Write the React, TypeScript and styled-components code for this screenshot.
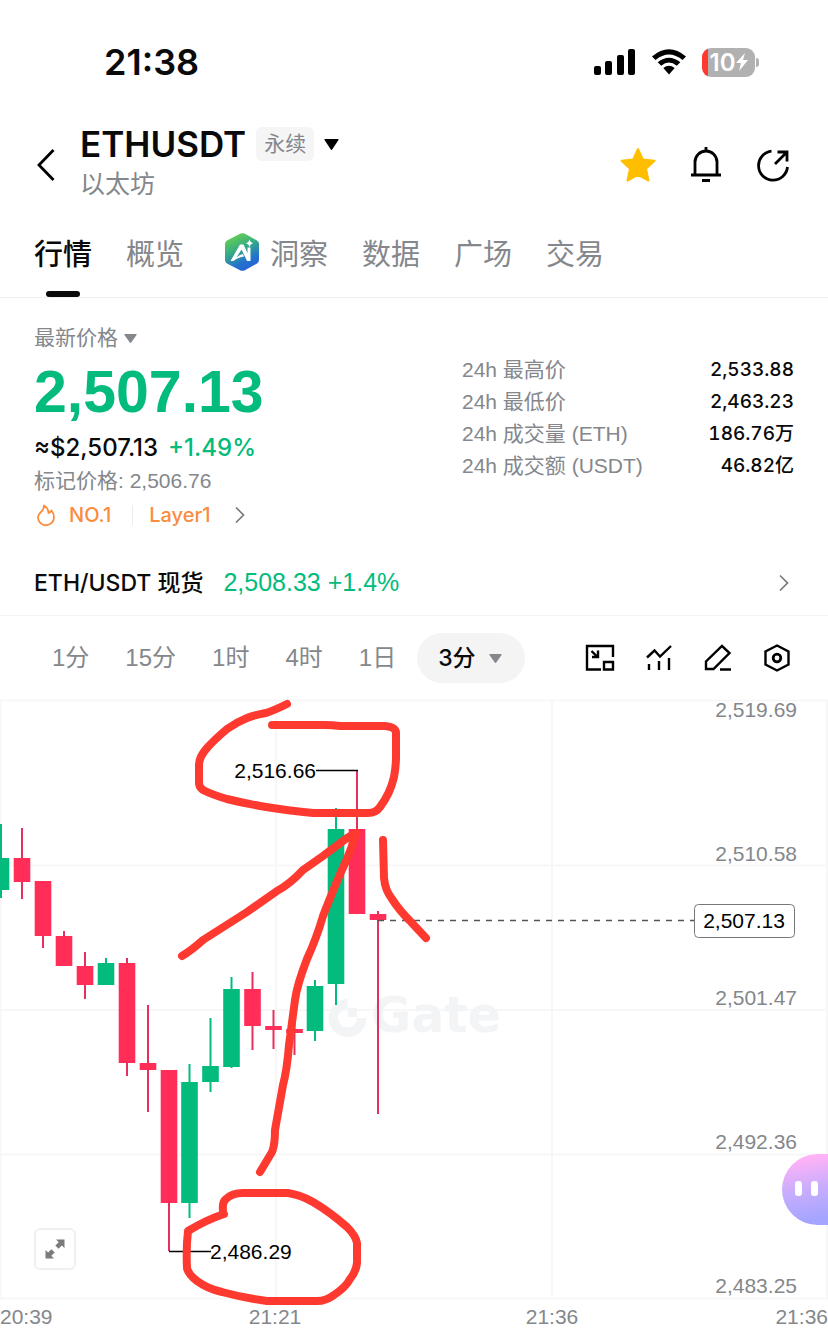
import React from 'react';
import styled, { createGlobalStyle } from 'styled-components';

const GREEN = '#02bb7c';
const RED = '#ff2d57';
const GREY = '#84878b';
const INK = '#0a0a0a';
const MARK = '#fe3a30';
const PLAIN = "'Liberation Sans', 'Noto Sans CJK SC', sans-serif";

const GlobalStyle = createGlobalStyle`
  * { box-sizing: border-box; }
  body {
    margin: 0;
    background: #fff;
    color: ${INK};
    font-family: Inter, 'Noto Sans CJK SC', sans-serif;
  }
  button { font: inherit; color: inherit; background: none; border: 0; padding: 0; margin: 0; }
  a { color: inherit; text-decoration: none; }
  svg { display: block; flex: none; }
  h1, p, dl, dt, dd { margin: 0; font-weight: inherit; }
`;

const Page = styled.div`
  overflow: hidden;
`;

const StatusBar = styled.div`
  display: flex;
  align-items: center;
  justify-content: space-between;
  padding: 40px 73px 0 104px;
  height: 84px;
`;
const Clock = styled.time`
  font-size: 36px;
  line-height: 44px;
  font-weight: 600;
`;
const StatusIcons = styled.div`
  display: flex;
  align-items: center;
  gap: 15px;
`;
const Battery = styled.div`
  position: relative;
  width: 53px;
  height: 29px;
  border-radius: 9px;
  background: linear-gradient(90deg, ${MARK} 6px, #b1b1b1 6px);
  color: #fff;
  display: flex;
  align-items: center;
  justify-content: center;
  padding-left: 2px;
  font-size: 24px;
  font-weight: 600;
  &::after {
    content: '';
    position: absolute;
    right: -4px;
    top: 10px;
    width: 3px;
    height: 9px;
    border-radius: 0 4px 4px 0;
    background: #b1b1b1;
  }
`;

const Header = styled.header`
  display: flex;
  align-items: center;
  padding: 36px 36px 0 36px;
  height: 126px;
`;
const IconButton = styled.button`
  display: flex;
  align-items: center;
  justify-content: center;
`;
const Pair = styled.div`
  flex: 1;
  margin-left: 24px;
  padding-bottom: 6px;
`;
const PairTop = styled.div`
  display: flex;
  align-items: center;
  gap: 10px;
`;
const PairName = styled.h1`
  font-size: 35px;
  line-height: 44px;
  font-weight: 600;
`;
const Badge = styled.span`
  padding: 0 8px;
  border-radius: 6px;
  background: #f5f5f6;
  color: ${GREY};
  font-size: 21px;
  line-height: 34px;
`;
const PairSub = styled.p`
  color: ${GREY};
  font-size: 25px;
  line-height: 36px;
`;
const HeaderActions = styled.div`
  display: flex;
  align-items: center;
  gap: 32px;
`;

const Tabs = styled.nav`
  display: flex;
  gap: 34px;
  padding: 0 34px;
  height: 88px;
  border-bottom: 1px solid #f0f0f1;
`;
const Tab = styled.a<{ $active?: boolean }>`
  position: relative;
  display: flex;
  align-items: center;
  gap: 10px;
  height: 88px;
  padding-bottom: 4px;
  font-size: 29px;
  font-weight: ${(p) => (p.$active ? 500 : 400)};
  color: ${(p) => (p.$active ? INK : GREY)};
  &::after {
    content: '';
    display: ${(p) => (p.$active ? 'block' : 'none')};
    position: absolute;
    left: 12px;
    right: 12px;
    bottom: 1px;
    height: 6px;
    border-radius: 3px;
    background: ${INK};
  }
`;

const Summary = styled.section`
  display: flex;
  justify-content: space-between;
  padding: 26px 34px 0;
  height: 252px;
`;
const PriceKind = styled.button`
  display: flex;
  align-items: center;
  gap: 6px;
  color: ${GREY};
  font-size: 21px;
  line-height: 28px;
`;
const Price = styled.p`
  color: ${GREEN};
  font-family: ${PLAIN};
  font-size: 59px;
  line-height: 80px;
  font-weight: 700;
`;
const Fiat = styled.p`
  display: flex;
  gap: 10px;
  font-size: 24px;
  line-height: 32px;
  font-weight: 500;
`;
const Gain = styled.span`
  color: ${GREEN};
`;
const MarkPrice = styled.p`
  color: ${GREY};
  font-family: ${PLAIN};
  font-size: 21px;
  line-height: 34px;
`;
const Tags = styled.div`
  display: flex;
  align-items: center;
  color: #fb8c3f;
  font-size: 20px;
  line-height: 34px;
  font-weight: 500;
`;
const TagLink = styled.a`
  display: flex;
  align-items: center;
  gap: 11px;
`;
const Divider = styled.i`
  width: 1px;
  height: 20px;
  margin: 0 16px 0 21px;
  background: #ececee;
`;
const TagMore = styled(IconButton)`
  margin-left: 24px;
`;

const Stats = styled.dl`
  width: 332px;
  padding-top: 30px;
`;
const Stat = styled.div`
  display: flex;
  justify-content: space-between;
  line-height: 32px;
  height: 32px;
  dt { color: ${GREY}; font-family: ${PLAIN}; font-size: 21px; }
  dd { font-weight: 500; font-size: 19px; font-variant-numeric: tabular-nums; }
`;

const SpotRow = styled.a`
  display: flex;
  align-items: center;
  height: 66px;
  padding: 0 38px 0 34px;
  border-bottom: 1px solid #f3f3f4;
`;
const SpotText = styled.span`
  display: flex;
  flex: 1;
  align-items: baseline;
  gap: 20px;
  padding-bottom: 3px;
`;
const SpotName = styled.span`
  font-size: 23px;
  font-weight: 500;
`;
const SpotPrice = styled(Gain)`
  font-family: ${PLAIN};
  font-size: 25px;
`;

const Toolbar = styled.div`
  display: flex;
  align-items: center;
  justify-content: space-between;
  height: 84px;
  padding: 0 36px 0 52px;
`;
const Intervals = styled.div`
  display: flex;
  align-items: center;
  gap: 36px;
`;
const Interval = styled.button`
  color: ${GREY};
  font-family: ${PLAIN};
  font-size: 24px;
  line-height: 50px;
`;
const Picked = styled(Interval)`
  display: flex;
  align-items: center;
  gap: 13px;
  margin-left: -15px;
  padding: 0 23px 0 21px;
  border-radius: 25px;
  background: #f4f4f5;
  color: ${INK};
  font-family: Inter, 'Noto Sans CJK SC', sans-serif;
  font-size: 23px;
  font-weight: 500;
`;
const Tools = styled.div`
  display: flex;
  gap: 29px;
`;

const ChartArea = styled.section`
  position: relative;
`;
const ChartSvg = styled.svg`
  width: 100%;
  height: auto;
  overflow: visible;
  font-family: ${PLAIN};
  font-size: 21px;
`;
const ExpandButton = styled(IconButton)`
  position: absolute;
  left: 34px;
  bottom: 70px;
  width: 42px;
  height: 42px;
  border: 2px solid #f0f0f1;
  border-radius: 6px;
  background: #fff;
`;
const Assistant = styled(IconButton)`
  position: absolute;
  right: 0;
  bottom: 115px;
  width: 46px;
  height: 71px;
  gap: 9px;
  padding: 0 0 2px 3px;
  border-radius: 36px 0 0 36px;
  background: linear-gradient(170deg, #ffb2f6 10%, #c9adfd 50%, #a5a5ff 90%);
`;
const Eye = styled.i`
  width: 7px;
  height: 15px;
  border-radius: 3px;
  background: #fff;
`;

const Caret = ({ w, h, color }: { w: number; h: number; color: string }) => (
  <svg width={w} height={h} viewBox="0 0 14 10" preserveAspectRatio="none" fill={color}>
    <path d="M1 0H13Q14 .2 13.5 1L7.8 9.4Q7 10.4 6.2 9.4L.5 1Q0 .2 1 0Z" />
  </svg>
);
const Chevron = () => (
  <svg width="12" height="18" viewBox="0 0 12 18" fill="none" stroke="#77797d" strokeWidth="1.7">
    <path d="M2 1.5L9.5 9L2 16.5" />
  </svg>
);

type Candle = [x: number, up: boolean, top: number, bottom: number, high: number, low: number];
const candles: Candle[] = [
  [1, true, 158, 190, 124, 198],
  [22, false, 158, 182, 128, 199],
  [43, false, 181, 236, 181, 248],
  [64, false, 236, 266, 231, 266],
  [85, false, 266, 285, 252, 299],
  [106, true, 263, 285, 258, 285],
  [127, false, 263, 363, 258, 376],
  [148, false, 363, 370, 305, 412],
  [169, false, 370, 503, 370, 551],
  [189.5, true, 382, 503, 364, 518],
  [210.5, true, 366, 382, 318, 392],
  [231.5, true, 289, 367, 277, 368],
  [252.5, false, 289, 326, 272, 350],
  [273.5, false, 326, 330, 310, 349],
  [294.5, false, 329, 333, 320, 355],
  [315, true, 286, 331, 280, 341],
  [336, true, 129, 284, 108, 305],
  [357, false, 129, 214, 70, 214],
  [378, false, 214, 220, 211, 414],
];
const gridY = [0.5, 165.5, 310, 454.5, 598.5];
const gridX = [0.5, 276, 552, 827];
const priceLabels: [string, number][] = [
  ['2,519.69', 17], ['2,510.58', 161], ['2,501.47', 305], ['2,492.36', 449], ['2,483.25', 593],
];

const Chart = () => (
  <ChartSvg viewBox="0 0 828 640" role="img" aria-label="ETHUSDT">
    <g stroke="#f7f7f8" strokeWidth="2">
      {gridY.map((y) => <line key={y} x1="0" x2="828" y1={y} y2={y} />)}
      {gridX.map((x) => <line key={x} x1={x} x2={x} y1="0" y2="598" />)}
    </g>
    <g fill="#f3f4f6">
      <path d="M347.500 299A19 19 0 1 0 366.500 318H357A9.500 9.500 0 1 1 347.500 308.500Z" />
      <rect x="348" y="308" width="9" height="9" />
      <text x="371" y="332" fontFamily="'DejaVu Sans', sans-serif" fontSize="49" fontWeight="700">Gate</text>
    </g>
    {candles.map(([x, up, top, bottom, high, low]) => (
      <g key={x} fill={up ? GREEN : RED}>
        <rect x={x - 1} y={high} width="2" height={low - high} fill={up ? GREEN : '#e5305f'} />
        <rect x={x - 8.3} y={top} width="16.600" height={bottom - top} />
      </g>
    ))}
    <path d="M378 220.500H694" stroke="#555" strokeWidth="1.500" strokeDasharray="6 6" />
    <path d="M316 70.500H358M169 551.500H211" stroke="#000" strokeWidth="1.500" />
    <g fill={GREY}>
      {priceLabels.map(([label, y]) => (
        <text key={label} x="797" y={y} textAnchor="end">{label}</text>
      ))}
      <text x="0" y="624">20:39</text>
      <text x="275" y="624" textAnchor="middle">21:21</text>
      <text x="552" y="624" textAnchor="middle">21:36</text>
      <text x="828" y="624" textAnchor="end">21:36</text>
    </g>
    <rect x="694.500" y="204.500" width="100" height="33" rx="4" fill="#fff" stroke="#777" />
    <g fill="#000">
      <text x="744" y="228" textAnchor="middle">2,507.13</text>
      <text x="316" y="78" textAnchor="end">2,516.66</text>
      <text x="210" y="559">2,486.29</text>
    </g>
    <g fill="none" stroke={MARK} strokeWidth="8" strokeLinecap="round" strokeLinejoin="round">
      <path d="M287 4Q275 10 266 13Q254 15 247 18Q237 22 227 29Q214 40 207 48Q199 57 199 65V83Q199 87 203 90Q213 95 227 99Q243 103 260 106Q290 111 313 113H368Q376 113 380 107Q390 94 394 77Q396 66 396 57V33Q396 27 385 26H340Q332 25 325 25H272" />
      <path d="M182 256Q192 250 203 240L247 212L277 191Q290 184 303 170L323 156L347 138Q353 134 356 133Q352 147 347 159Q337 180 323 216Q317 237 307 259Q297 285 295 300L289 345Q287 370 283 385L275 430Q275 445 272 452L260 472" />
      <path d="M383 140L384 178Q385 190 392 199Q399 210 411 222L426 238" />
      <path d="M224 514Q206 520 188 531Q186 548 187 568Q188 574 197 581Q208 589 222 592Q244 598 267 601H317Q326 601 334 595Q346 587 350 579Q356 572 357 563V543Q356 536 347 527Q330 512 313 502Q301 495 288 493H243Q232 493 226 499Q222 502 223 511" />
    </g>
  </ChartSvg>
);

export default function App() {
  return (
    <Page>
      <GlobalStyle />
      <StatusBar>
        <Clock>21:38</Clock>
        <StatusIcons>
          <svg width="42" height="28" viewBox="0 0 42 28" fill="#000">
            <rect x="0" y="18" width="7" height="9" rx="2" />
            <rect x="11" y="13" width="7" height="14" rx="2" />
            <rect x="23" y="7" width="7" height="20" rx="2" />
            <rect x="34" y="1" width="7" height="26" rx="2" />
          </svg>
          <svg width="36" height="28" viewBox="0 0 36 28" fill="#000">
            <path d="M1 8.500Q18-6 35 8.500L31.500 12Q18 1 4.500 12Z" />
            <path d="M6.700 14.300Q18 5 29.300 14.300L25.800 17.800Q18 11 10.200 17.800Z" />
            <path d="M12.300 20Q18 15.500 23.700 20L18 26.500Z" />
          </svg>
          <Battery>
            10
            <svg width="14" height="18" viewBox="0 0 14 18" fill="#fff">
              <path d="M10 0L1 10H6L4 18L13 7H8Z" />
            </svg>
          </Battery>
        </StatusIcons>
      </StatusBar>

      <Header>
        <IconButton aria-label="返回">
          <svg width="20" height="34" viewBox="0 0 20 34" fill="none" stroke="#000" strokeWidth="2.800">
            <path d="M17.500 2L3 17L17.500 32" />
          </svg>
        </IconButton>
        <Pair>
          <PairTop>
            <PairName>ETHUSDT</PairName>
            <Badge>永续</Badge>
            <IconButton aria-label="切换交易对"><Caret w={15} h={11} color="#000" /></IconButton>
          </PairTop>
          <PairSub>以太坊</PairSub>
        </Pair>
        <HeaderActions>
          <IconButton aria-label="收藏">
            <svg width="36" height="36" viewBox="0 0 36 36" fill="#ffbf00" stroke="#ffbf00" strokeWidth="2" strokeLinejoin="round">
              <path d="M18 2L22.800 12.500L34.500 13.800L26 21.800L28.500 33.500L18 27.800L7.500 33.500L10 21.800L1.500 13.800L13.200 12.500Z" />
            </svg>
          </IconButton>
          <IconButton aria-label="提醒">
            <svg width="36" height="38" viewBox="0 0 36 38" fill="none" stroke="#000" strokeWidth="2.800">
              <path d="M7 29V16A11 11 0 0 1 29 16V29M3 29H33M18 5V1M14 34.500H22" />
            </svg>
          </IconButton>
          <IconButton aria-label="分享">
            <svg width="36" height="36" viewBox="0 0 36 36" fill="none" stroke="#000" strokeWidth="2.800">
              <path d="M15.500 4.200A14.500 14.500 0 1 0 31.500 20M19 17L30 6M21.500 5H31V14.500" />
            </svg>
          </IconButton>
        </HeaderActions>
      </Header>

      <Tabs>
        <Tab href="#market" $active>行情</Tab>
        <Tab href="#overview">概览</Tab>
        <Tab href="#insight">
          <svg width="42" height="38" viewBox="0 0 42 38">
            <defs>
              <linearGradient id="hex" x1=".25" y1="0" x2=".7" y2="1">
                <stop offset="0" stopColor="#69d34a" />
                <stop offset=".4" stopColor="#37ad83" />
                <stop offset=".75" stopColor="#2472cc" />
                <stop offset="1" stopColor="#2563db" />
              </linearGradient>
            </defs>
            <path d="M22.500 .6Q24.500-.2 26.500 .6L39 7.500Q41 8.600 41 11V27Q41 29.400 39 30.500L26.500 37.400Q24.500 38.200 22.500 37.400L9 30.500Q7 29.400 7 27V11Q7 8.600 9 7.500Z" fill="url(#hex)" />
            <path d="M22 11.500H25.500L29.500 20V14.500H32.500V28H29L23.500 16.500L18.500 24.500Q21.500 21.500 25 21L26 23.500Q19 24.500 15.500 28H12.500Z" fill="#fff" />
            <path d="M31.500 6.500L32.700 9L35 10.200L32.700 11.400L31.500 14L30.300 11.400L28 10.200L30.300 9Z" fill="#fff" />
          </svg>
          洞察
        </Tab>
        <Tab href="#data">数据</Tab>
        <Tab href="#square">广场</Tab>
        <Tab href="#trade">交易</Tab>
      </Tabs>

      <Summary>
        <div>
          <PriceKind>最新价格<Caret w={13} h={9} color={GREY} /></PriceKind>
          <Price>2,507.13</Price>
          <Fiat><span>≈$2,507.13</span><Gain>+1.49%</Gain></Fiat>
          <MarkPrice>标记价格: 2,506.76</MarkPrice>
          <Tags>
            <TagLink href="#rank">
              <svg width="24" height="24" viewBox="0 0 24 24" fill="none" stroke="#fb8c3f" strokeWidth="1.800" strokeLinejoin="round">
                <path d="M10 2.500Q14.500 5 14.500 10Q16.500 9.500 17.500 7.500Q20 10.500 20 14A8 8 0 0 1 4 14.500Q4 11.500 6.500 9.500Q10 6.500 10 2.500Z" />
              </svg>
              NO.1
            </TagLink>
            <Divider />
            <TagLink href="#layer1">Layer1</TagLink>
            <TagMore aria-label="更多"><Chevron /></TagMore>
          </Tags>
        </div>
        <Stats>
          <Stat><dt>24h 最高价</dt><dd>2,533.88</dd></Stat>
          <Stat><dt>24h 最低价</dt><dd>2,463.23</dd></Stat>
          <Stat><dt>24h 成交量 (ETH)</dt><dd>186.76万</dd></Stat>
          <Stat><dt>24h 成交额 (USDT)</dt><dd>46.82亿</dd></Stat>
        </Stats>
      </Summary>

      <SpotRow href="#spot">
        <SpotText>
          <SpotName>ETH/USDT 现货</SpotName>
          <SpotPrice>2,508.33 +1.4%</SpotPrice>
        </SpotText>
        <Chevron />
      </SpotRow>

      <Toolbar>
        <Intervals>
          <Interval>1分</Interval>
          <Interval>15分</Interval>
          <Interval>1时</Interval>
          <Interval>4时</Interval>
          <Interval>1日</Interval>
          <Picked>3分<Caret w={13} h={9} color={GREY} /></Picked>
        </Intervals>
        <Tools>
          <IconButton aria-label="画中画">
            <svg width="30" height="30" viewBox="0 0 30 30" fill="none" stroke="#000" strokeWidth="2.400">
              <path d="M28 14V3H2V26.500H16M6.500 8L12 13.500M7 14H13V7.500M19 19H28V26.500H19Z" />
            </svg>
          </IconButton>
          <IconButton aria-label="指标">
            <svg width="30" height="30" viewBox="0 0 30 30" fill="none" stroke="#000" strokeWidth="2.400">
              <path d="M3 14.500L10.500 7.500L16 13.500L27 3M5 21V27M15 18V27M25 15V27" />
            </svg>
          </IconButton>
          <IconButton aria-label="画线">
            <svg width="30" height="30" viewBox="0 0 30 30" fill="none" stroke="#000" strokeWidth="2.400">
              <path d="M3 26V18.500L19 3L26.500 10L10.500 26ZM17 26.500H28" />
            </svg>
          </IconButton>
          <IconButton aria-label="设置">
            <svg width="30" height="30" viewBox="0 0 30 30" fill="none" stroke="#000" strokeWidth="2.400">
              <path d="M15 2.500L26.500 8.500V21.500L15 27.500L3.500 21.500V8.500Z" />
              <circle cx="15" cy="15" r="3.800" strokeWidth="2.800" />
            </svg>
          </IconButton>
        </Tools>
      </Toolbar>

      <ChartArea>
        <Chart />
        <ExpandButton aria-label="全屏">
          <svg width="24" height="24" viewBox="0 0 24 24" fill="#7b7b7b">
            <path d="M13 2.500H21.500V11L18.900 8.400L15.500 11.800L12.300 8.600L15.700 5.200Z" />
            <path d="M11 21.500H2.500V13L5.100 15.600L8.500 12.200L11.700 15.400L8.300 18.800Z" />
          </svg>
        </ExpandButton>
        <Assistant aria-label="助手"><Eye /><Eye /></Assistant>
      </ChartArea>
    </Page>
  );
}
